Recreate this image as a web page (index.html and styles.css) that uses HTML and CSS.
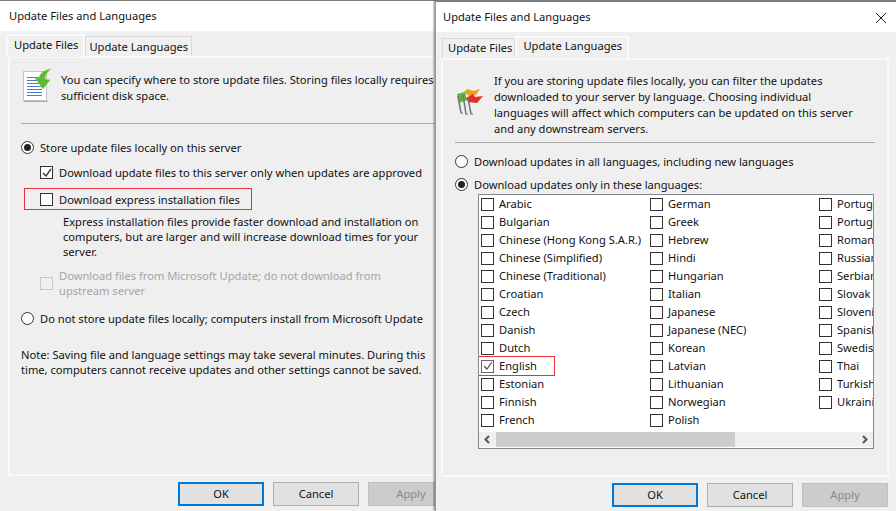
FILE: index.html
```html
<!DOCTYPE html>
<html lang="en">
<head>
<meta charset="utf-8">
<title>Update Files and Languages</title>
<link rel="stylesheet" href="styles.css">
</head>
<body>
<section class="win win-left">
  <header class="title">Update Files and Languages</header>
  <nav class="tabs">
    <div class="tab active">Update Files</div>
    <div class="tab">Update Languages</div>
  </nav>
  <div class="panel">
    <div class="intro">
      <svg class="ico" width="30" height="34" viewBox="0 0 30 34">
        <rect x="1.5" y="3.5" width="23" height="29" fill="#fff" stroke="#c4c4c4"/>
        <rect x="2" y="33" width="24" height="1" fill="#aaa"/>
        <path d="M5 9.5h12M5 12.5h12M5 15.5h12M5 18.5h15M5 21.5h15M5 24.5h15M5 27.5h15" stroke="#4a7fc4" stroke-width="1"/>
        <path d="M29 1C22 2 18 5 17 10L13 10 21 21 28 12 23 11C23 7 25 4 29 1Z" fill="#5cba2c" stroke="#8fd060" stroke-width=".6"/>
      </svg>
      <p>You can specify where to store update files. Storing files locally requires<br>sufficient disk space.</p>
    </div>
    <hr class="rule">
    <label class="opt r1"><span class="radio on"></span>Store update files locally on this server</label>
    <label class="opt c1"><span class="check"><svg width="10" height="10" viewBox="0 0 10 10"><path d="M1 5l3 3 5-7" fill="none" stroke="#333" stroke-width="1.3"/></svg></span>Download update files to this server only when updates are approved</label>
    <label class="opt c2"><span class="check"></span>Download express installation files<span class="mark mark-l"></span></label>
    <p class="desc">Express installation files provide faster download and installation on<br>computers, but are larger and will increase download times for your<br>server.</p>
    <label class="opt c3 dis"><span class="check"></span><span>Download files from Microsoft Update; do not download from<br>upstream server</span></label>
    <label class="opt r2"><span class="radio"></span>Do not store update files locally; computers install from Microsoft Update</label>
    <p class="note">Note: Saving file and language settings may take several minutes. During this<br>time, computers cannot receive updates and other settings cannot be saved.</p>
  </div>
  <footer class="btns">
    <button class="btn def">OK</button><button class="btn">Cancel</button><button class="btn off">Apply</button>
  </footer>
</section>

<section class="win win-right">
  <header class="title">Update Files and Languages
    <svg class="close" width="12" height="12" viewBox="0 0 12 12"><path d="M1 1l10 10M11 1L1 11" stroke="#222" stroke-width="1"/></svg>
  </header>
  <nav class="tabs">
    <div class="tab">Update Files</div>
    <div class="tab active">Update Languages</div>
  </nav>
  <div class="panel">
    <div class="intro">
      <svg class="ico" width="30" height="30" viewBox="0 0 30 30">
        <path d="M9 6L12 3 19 5 25 3 21 9 14 10Z" fill="#e8a020"/>
        <path d="M2 8L10 6 12 14 4 17Z" fill="#58b838"/>
        <path d="M11 12L18 8 20 11 28 10 22 17 13 16Z" fill="#e83020"/>
        <path d="M3 10L6 27M8 9L11 28M13 12L16 28" stroke="#777" stroke-width="1.6" fill="none"/>
        <path d="M5 27h3M10 28h3M15 28h3" stroke="#999" stroke-width="1.5"/>
      </svg>
      <p>If you are storing update files locally, you can filter the updates<br>downloaded to your server by language. Choosing individual<br>languages will affect which computers can be updated on this server<br>and any downstream servers.</p>
    </div>
    <hr class="rule">
    <label class="opt r3"><span class="radio"></span>Download updates in all languages, including new languages</label>
    <label class="opt r4"><span class="radio on"></span>Download updates only in these languages:</label>
    <div class="listbox">
      <div class="items">
        <div class="it"><span class="check"></span>Arabic</div>
        <div class="it"><span class="check"></span>Bulgarian</div>
        <div class="it"><span class="check"></span>Chinese (Hong Kong S.A.R.)</div>
        <div class="it"><span class="check"></span>Chinese (Simplified)</div>
        <div class="it"><span class="check"></span>Chinese (Traditional)</div>
        <div class="it"><span class="check"></span>Croatian</div>
        <div class="it"><span class="check"></span>Czech</div>
        <div class="it"><span class="check"></span>Danish</div>
        <div class="it"><span class="check"></span>Dutch</div>
        <div class="it"><span class="check tick"><svg width="10" height="10" viewBox="0 0 10 10"><path d="M1 5l3 3 5-7" fill="none" stroke="#555" stroke-width="1.2"/></svg></span>English<span class="mark mark-r"></span></div>
        <div class="it"><span class="check"></span>Estonian</div>
        <div class="it"><span class="check"></span>Finnish</div>
        <div class="it"><span class="check"></span>French</div>
        <div class="it"><span class="check"></span>German</div>
        <div class="it"><span class="check"></span>Greek</div>
        <div class="it"><span class="check"></span>Hebrew</div>
        <div class="it"><span class="check"></span>Hindi</div>
        <div class="it"><span class="check"></span>Hungarian</div>
        <div class="it"><span class="check"></span>Italian</div>
        <div class="it"><span class="check"></span>Japanese</div>
        <div class="it"><span class="check"></span>Japanese (NEC)</div>
        <div class="it"><span class="check"></span>Korean</div>
        <div class="it"><span class="check"></span>Latvian</div>
        <div class="it"><span class="check"></span>Lithuanian</div>
        <div class="it"><span class="check"></span>Norwegian</div>
        <div class="it"><span class="check"></span>Polish</div>
        <div class="it"><span class="check"></span>Portuguese (Brazil)</div>
        <div class="it"><span class="check"></span>Portuguese (Portugal)</div>
        <div class="it"><span class="check"></span>Romanian</div>
        <div class="it"><span class="check"></span>Russian</div>
        <div class="it"><span class="check"></span>Serbian</div>
        <div class="it"><span class="check"></span>Slovak</div>
        <div class="it"><span class="check"></span>Slovenian</div>
        <div class="it"><span class="check"></span>Spanish</div>
        <div class="it"><span class="check"></span>Swedish</div>
        <div class="it"><span class="check"></span>Thai</div>
        <div class="it"><span class="check"></span>Turkish</div>
        <div class="it"><span class="check"></span>Ukrainian</div>
      </div>
      <div class="hscroll">
        <svg width="17" height="15" viewBox="0 0 17 15"><path d="M10 4L6.5 7.5 10 11" fill="none" stroke="#555" stroke-width="2"/></svg>
        <div class="track"><div class="thumb"></div></div>
        <svg width="17" height="15" viewBox="0 0 17 15"><path d="M7 4l3.5 3.5L7 11" fill="none" stroke="#555" stroke-width="2"/></svg>
      </div>
    </div>
  </div>
  <footer class="btns">
    <button class="btn def">OK</button><button class="btn">Cancel</button><button class="btn off">Apply</button>
  </footer>
</section>
</body>
</html>
```
FILE: styles.css
```css
* { box-sizing: border-box; }
html, body { margin: 0; padding: 0; }
body {
  width: 896px; height: 511px; overflow: hidden; position: relative;
  background: #f0f0f0; color: #111;
  font-family: "Noto Sans", sans-serif; font-size: 11.15px; line-height: 15px;
}
p { margin: 0; }
.win { position: absolute; top: 0; height: 511px; background: #f0f0f0; border-top: 2px solid #7a7a7a; overflow: hidden; }
.win-left { left: 0; width: 436px; border-top-width: 1px; }
.win-right { left: 435px; width: 461px; box-shadow: -1px 0 2px rgba(0,0,0,.5); border-left: 1px solid #999; }
.title { height: 30px; background: #fff; padding: 7px 0 0 9px; white-space: nowrap; position: relative; }
.win-right .title { padding-left: 7px; }
.close { position: absolute; left: 439px; top: 10px; }
.tabs { display: flex; align-items: flex-end; height: 25px; padding-left: 6px; position: relative; z-index: 1; }
.win-right .tabs { padding-left: 6px; height: 26px; }
.tab { height: 20px; padding: 2px 3px 0 3px; background: #f0f0f0; border: 1px solid #d9d9d9; border-bottom: 0; white-space: nowrap; }
.tab.active { height: 23px; background: #f0f0f0; border: 2px solid #fafafa; border-bottom: 0; padding: 1px 5px 0 6px; margin-bottom: -1px; }
.win-right .tab { padding: 1px 2px 0 5px; }
.win-right .tab.active { padding: 0 5px 0 6px; }
.panel { position: relative; height: 420px; margin-left: 8px; border: 2px solid #fafafa; background: #efefef; }
.win-right .panel { margin: 0 7px 0 5px; height: 419px; }
.intro { display: flex; padding: 10px 0 0 12px; height: 65px; }
.intro p { padding-left: 9px; line-height: 16px; white-space: nowrap; }
.win-left .intro p { margin-top: 4px; }
.win-right .intro { padding: 13px 0 0 12px; height: 82px; }
.win-right .ico { margin-top: 13px; }
.rule { border: 0; height: 1px; background: #a9a9a9; margin: 0 0 0 11px; }
.win-right .rule { margin: 0 12px 0 12px; }
.opt { display: flex; align-items: center; white-space: nowrap; position: relative; }
.radio { width: 13px; height: 13px; border-radius: 50%; border: 1px solid #333; background: #fff; position: relative; flex: none; margin-right: 6px; }
.radio.on::after { content: ""; position: absolute; left: 2px; top: 2px; width: 7px; height: 7px; border-radius: 50%; background: #222; }
.check { width: 13px; height: 13px; border: 1px solid #333; background: #fff; flex: none; margin-right: 6px; display: inline-flex; align-items: center; justify-content: center; }
.it .check { margin-right: 5px; margin-top: 2px; }
.r1 { margin: 16px 0 0 11px; }
.c1 { margin: 10px 0 0 30px; }
.c2 { margin: 12px 0 0 30px; }
.mark { position: absolute; border: 1px solid #e8303a; pointer-events: none; }
.mark-l { left: -16px; top: -4px; width: 228px; height: 22px; }
.desc { margin: 7px 0 0 53px; white-space: nowrap; }
.dis { color: #a5a5a5; margin: 9px 0 0 30px; }
.dis .check { border-color: #c8c8c8; background: #f0f0f0; }
.r2 { margin: 13px 0 0 11px; }
.note { margin: 21px 0 0 11px; white-space: nowrap; }
.r3 { margin: 11px 0 0 12px; }
.r4 { margin: 8px 0 0 12px; }
.listbox { position: absolute; left: 35px; top: 134px; width: 396px; height: 255px; border: 1px solid #828790; background: #fff; }
.items { display: grid; grid-template-rows: repeat(13, 18px); grid-auto-flow: column; grid-auto-columns: 169px; overflow: hidden; height: 237px; padding: 0 0 0 2px; width: 394px; }
.it { display: flex; align-items: center; white-space: nowrap; position: relative; padding-bottom: 2px; }
.mark-r { left: -10px; top: -1px; width: 84px; height: 20px; }
.tick { border-color: #666; }
.hscroll { display: flex; align-items: center; height: 15px; background: #efefef; }
.track { flex: 1; height: 15px; }
.thumb { width: 239px; height: 15px; background: #cdcdcd; }
.btns { display: flex; position: absolute; left: 178px; top: 481px; gap: 9px; }
.win-right .btns { left: 176px; top: 481px; }
.btn { width: 86px; height: 24px; margin: 0; padding: 0 0 1px; background: #e1e1e1; border: 1px solid #adadad; font: inherit; color: #111; }
.btn.def { border: 2px solid #0078d7; }
.btn.off { background: #cccccc; border-color: #bfbfbf; color: #8a8a8a; }
```
